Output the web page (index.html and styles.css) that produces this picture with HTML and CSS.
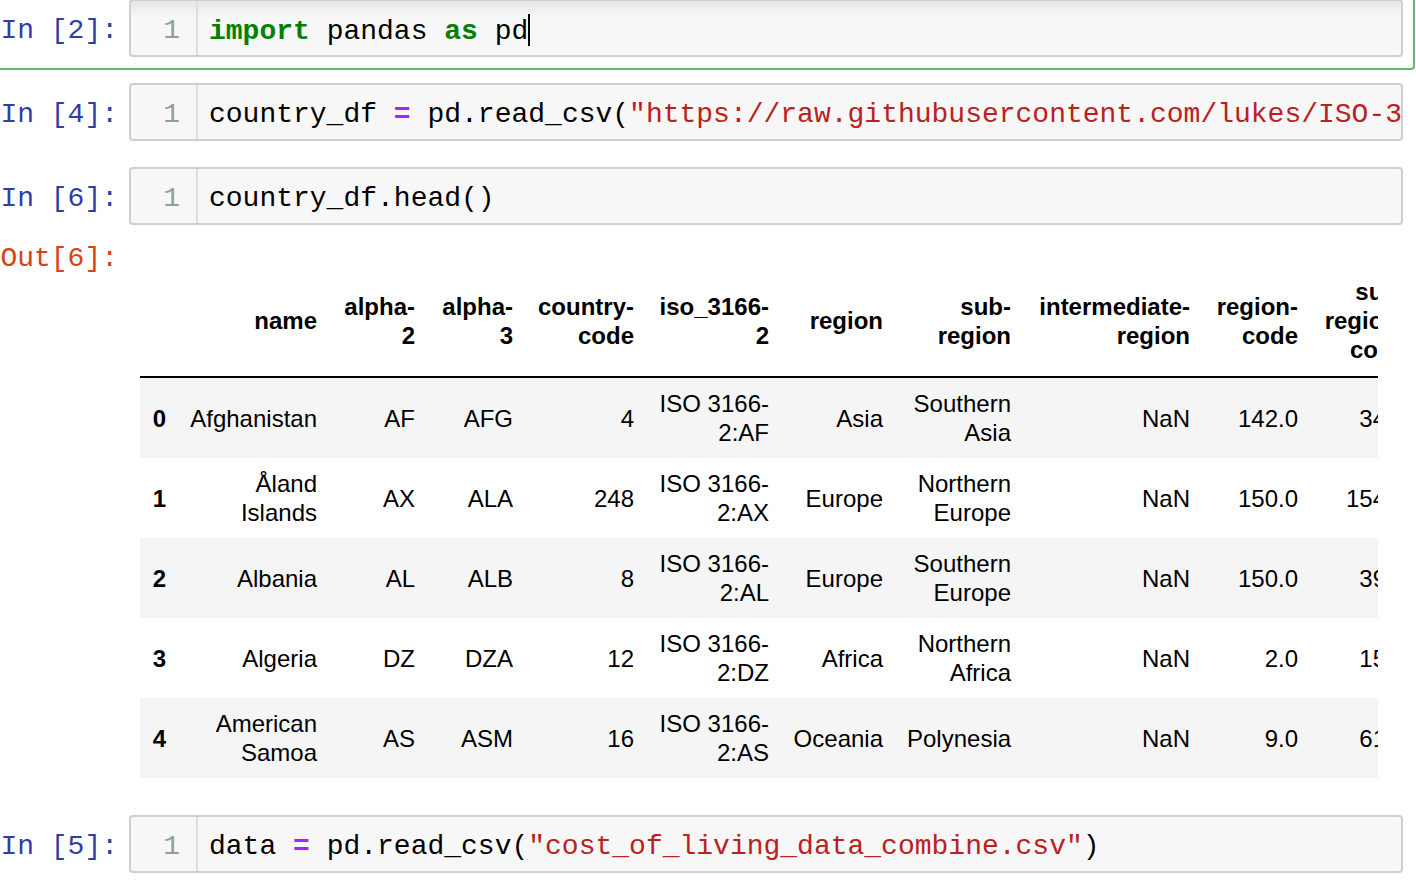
FILE: index.html
```html
<!DOCTYPE html>
<html>
<head>
<meta charset="utf-8">
<title>Notebook</title>
<link rel="stylesheet" href="styles.css">
</head>
<body>
<div class="notebook">
  <div class="cell selected">
    <div class="input">
      <div class="prompt in">In [2]:</div>
      <div class="input-area first">
        <div class="gutter">1</div>
        <div class="code"><span class="kw">import</span> pandas <span class="kw">as</span> pd<span class="cursor"></span></div>
      </div>
    </div>
  </div>

  <div class="cell">
    <div class="input">
      <div class="prompt in">In [4]:</div>
      <div class="input-area">
        <div class="gutter">1</div>
        <div class="code">country_df <span class="op">=</span> pd.read_csv(<span class="str">"https://raw.githubusercontent.com/lukes/ISO-3166-Countries-with-Regional-Codes/master/all/all.csv"</span>)</div>
      </div>
    </div>
  </div>

  <div class="cell">
    <div class="input">
      <div class="prompt in">In [6]:</div>
      <div class="input-area">
        <div class="gutter">1</div>
        <div class="code">country_df.head()</div>
      </div>
    </div>
    <div class="output">
      <div class="prompt out">Out[6]:</div>
      <div class="out-sub">
        <div class="df-wrap">
          <table class="df">
            <colgroup>
              <col class="w-idx"><col class="w-name"><col class="w-a2"><col class="w-a3"><col class="w-cc"><col class="w-iso"><col class="w-reg"><col class="w-sub"><col class="w-int"><col class="w-rc"><col class="w-src"><col class="w-irc">
            </colgroup>
            <thead>
              <tr>
                <th></th>
                <th>name</th>
                <th>alpha-<br>2</th>
                <th>alpha-<br>3</th>
                <th>country-<br>code</th>
                <th>iso_3166-<br>2</th>
                <th>region</th>
                <th>sub-<br>region</th>
                <th>intermediate-<br>region</th>
                <th>region-<br>code</th>
                <th>sub-<br>region-<br>code</th>
                <th>intermediate-<br>region-<br>code</th>
              </tr>
            </thead>
            <tbody>
              <tr>
                <th>0</th><td>Afghanistan</td><td>AF</td><td>AFG</td><td>4</td><td>ISO 3166-<br>2:AF</td><td>Asia</td><td>Southern<br>Asia</td><td>NaN</td><td>142.0</td><td>34.0</td><td>NaN</td>
              </tr>
              <tr>
                <th>1</th><td>Åland<br>Islands</td><td>AX</td><td>ALA</td><td>248</td><td>ISO 3166-<br>2:AX</td><td>Europe</td><td>Northern<br>Europe</td><td>NaN</td><td>150.0</td><td>154.0</td><td>NaN</td>
              </tr>
              <tr>
                <th>2</th><td>Albania</td><td>AL</td><td>ALB</td><td>8</td><td>ISO 3166-<br>2:AL</td><td>Europe</td><td>Southern<br>Europe</td><td>NaN</td><td>150.0</td><td>39.0</td><td>NaN</td>
              </tr>
              <tr>
                <th>3</th><td>Algeria</td><td>DZ</td><td>DZA</td><td>12</td><td>ISO 3166-<br>2:DZ</td><td>Africa</td><td>Northern<br>Africa</td><td>NaN</td><td>2.0</td><td>15.0</td><td>NaN</td>
              </tr>
              <tr>
                <th>4</th><td>American<br>Samoa</td><td>AS</td><td>ASM</td><td>16</td><td>ISO 3166-<br>2:AS</td><td>Oceania</td><td>Polynesia</td><td>NaN</td><td>9.0</td><td>61.0</td><td>NaN</td>
              </tr>
            </tbody>
          </table>
        </div>
      </div>
    </div>
  </div>

  <div class="cell">
    <div class="input">
      <div class="prompt in">In [5]:</div>
      <div class="input-area">
        <div class="gutter">1</div>
        <div class="code">data <span class="op">=</span> pd.read_csv(<span class="str">"cost_of_living_data_combine.csv"</span>)</div>
      </div>
    </div>
  </div>
</div>
</body>
</html>
```

FILE: styles.css
```css
* { box-sizing: border-box; }

html, body {
  margin: 0;
  padding: 0;
  background: #ffffff;
}

body {
  width: 1416px;
  height: 890px;
  overflow: hidden;
  font-family: "Liberation Sans", Arial, Helvetica, sans-serif;
  color: #000;
}

.notebook {
  margin: -14px 0 0 -12px;
  width: 1427px;
}

.cell {
  border: 2px solid transparent;
  border-radius: 4px;
  padding: 11px 10px;
}

.cell.selected {
  border-color: #66bb6a;
}

.input {
  display: flex;
}

.prompt {
  flex: none;
  width: 129px;
  padding-right: 11px;
  text-align: right;
  font-family: "Liberation Mono", "Courier New", monospace;
  font-size: 28px;
  line-height: 34px;
  white-space: pre;
}

.prompt.in {
  color: #303f9f;
  padding-top: 15px;
}

.prompt.out {
  color: #d84315;
  padding-top: 17px;
}

.input-area {
  flex: 1;
  min-width: 0;
  height: 58px;
  display: flex;
  background: #f7f7f7;
  border: 2px solid #cfcfcf;
  border-radius: 4px;
  overflow: hidden;
}

.input-area.first {
  background: linear-gradient(#e6e6e6 0px, #f7f7f7 16px, #f7f7f7 100%);
}

.gutter {
  flex: none;
  width: 67px;
  padding: 13px 16px 0 0;
  border-right: 2px solid #dddddd;
  text-align: right;
  color: #999999;
  font-family: "Liberation Mono", "Courier New", monospace;
  font-size: 28px;
  line-height: 34px;
}

.code {
  flex: 1;
  min-width: 0;
  padding: 13px 0 0 11px;
  white-space: pre;
  overflow: hidden;
  font-family: "Liberation Mono", "Courier New", monospace;
  font-size: 28px;
  line-height: 34px;
  color: #000;
}

.kw {
  color: #008000;
  font-weight: bold;
}

.op {
  color: #aa22ff;
  font-weight: bold;
}

.str {
  color: #ba2121;
}

.cursor {
  display: inline-block;
  width: 0;
  height: 32px;
  border-left: 2px solid #000;
  vertical-align: -7px;
}

.output {
  display: flex;
}

.out-sub {
  flex: none;
  padding: 42px 0 11px 11px;
}

.df-wrap {
  width: 1238px;
  overflow: hidden;
}

.df {
  table-layout: fixed;
  border-collapse: collapse;
  border-spacing: 0;
  width: 1456px;
  font-size: 24px;
  color: #000;
}

.df th,
.df td {
  padding: 11px 12px;
  line-height: 29px;
  text-align: right;
  vertical-align: middle;
  white-space: nowrap;
  border: none;
}

.df th {
  font-weight: bold;
}

.df thead th {
  padding: 10px 12px 12px;
  border-bottom: 2px solid #000;
}

.df tbody tr:nth-child(odd) {
  background: #f5f5f5;
}

.w-idx { width: 38px; }
.w-name { width: 151px; }
.w-a2 { width: 98px; }
.w-a3 { width: 98px; }
.w-cc { width: 121px; }
.w-iso { width: 135px; }
.w-reg { width: 114px; }
.w-sub { width: 128px; }
.w-int { width: 179px; }
.w-rc { width: 108px; }
.w-src { width: 108px; }
.w-irc { width: 178px; }
```
